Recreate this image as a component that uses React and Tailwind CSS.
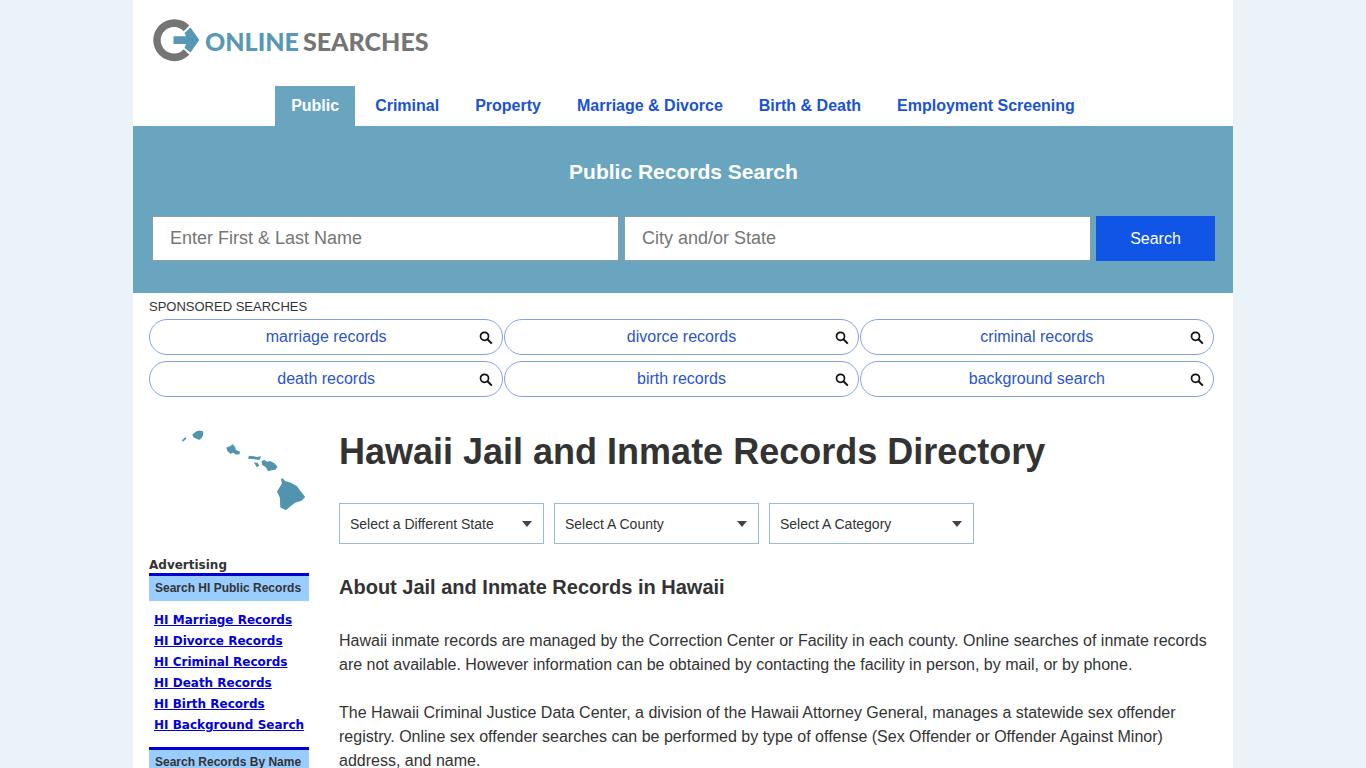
import React, { useState } from 'react';

const TABS = ['Public', 'Criminal', 'Property', 'Marriage & Divorce', 'Birth & Death', 'Employment Screening'];

const SPONSORED = [
  'marriage records',
  'divorce records',
  'criminal records',
  'death records',
  'birth records',
  'background search',
];

const AD_LINKS = [
  'HI Marriage Records',
  'HI Divorce Records',
  'HI Criminal Records',
  'HI Death Records',
  'HI Birth Records',
  'HI Background Search',
];

const Logo = () => (
  <a href="#" aria-label="Online Searches" className="inline-flex items-center">
    <svg viewBox="0 0 48 44" className="w-12 h-11" aria-hidden="true">
      <path
        d="M36.3 7.5A21 21 0 1 0 36.3 36.8L30.8 31.2A13.3 13.3 0 1 1 30.8 13.2Z"
        fill="#757575"
      />
      <path d="M20.5 18.2H33L31.5 15L37.5 9.5L46.3 22L37.5 34.5L31.5 30L33 26H20.5Z" fill="#5698b5" />
    </svg>
    <span className="ml-1 pt-0.5 font-['Lato',sans-serif] font-black text-[25px] leading-8 text-[#5698b5]">ONLINE</span>
    <span className="ml-1 pt-0.5 font-['Lato',sans-serif] font-black text-[25px] leading-8 text-[#757575]">SEARCHES</span>
  </a>
);

const SearchIcon = () => (
  <svg viewBox="0 0 14 14" className="w-3.5 h-3.5" aria-hidden="true">
    <circle cx="5.5" cy="5.3" r="4" fill="none" stroke="#111" strokeWidth="1.7" />
    <path d="M8.2 8L12.8 12.6" stroke="#111" strokeWidth="2" />
  </svg>
);

const HawaiiMap = () => (
  <svg viewBox="0 0 160 100" className="w-full" fill="#5294b0" aria-label="Hawaii" role="img">
    <path d="M32.8 20.5L36.5 17L37.3 18.8L34.2 21.5Z" />
    <path d="M43.3 14.5L47 11.4L50.5 10.6L53.9 11.3L54.4 13.8L52.9 17.7L50.2 20L47 18.6L44.5 17.2Z" />
    <path d="M77.3 27.5L81.5 26L83.5 24.1L86 27L87 30L91 31.5L90.3 34.6L86.5 34.4L84.5 32.8L81.5 33.8L78.3 31Z" />
    <path d="M100 35.8L104.5 36.2L108 37L112.2 36.3L110.5 40L107 39.5L103 39L99 38.7Z" />
    <path d="M104.8 42.6L108.5 42.8L110.3 45.8L108 47.2Z" />
    <path d="M112.3 41.5L115 39.8L118 41.8L121 41.1L125.5 43.3L128.5 46.8L126.5 49.7L122.5 50.2L119.1 51.2L116.8 47.2L113.3 45Z" />
    <path d="M131.8 58.8L134 58.4L136 61L142 62.8L148 66.3L151.5 71L156.2 77L152.5 80.7L146 82.7L141.5 86.2L137 90.2L131.3 87.5L130.8 77.5L128 71.5L133 63.5Z" />
  </svg>
);

const SelectBox = ({ label }) => (
  <div className="relative flex-1 max-w-[205px]">
    <select
      aria-label={label}
      className="appearance-none w-full h-[41px] pl-[10px] pr-8 text-sm text-[#333] bg-white border border-[#9bbccb]"
    >
      <option>{label}</option>
    </select>
    <svg viewBox="0 0 10 6" className="absolute right-3 top-[18px] w-2.5 h-1.5 pointer-events-none" aria-hidden="true">
      <path d="M0 0H10L5 6Z" fill="#444" />
    </svg>
  </div>
);

const AdHeading = ({ children }) => (
  <h3 className="border-t-3 border-[#0000d6] bg-[#99ccff] h-7 pl-1.5 text-xs leading-6 font-bold text-[#333] whitespace-nowrap">
    {children}
  </h3>
);

const App = () => {
  const [tab, setTab] = useState('Public');

  return (
    <div className="min-h-screen bg-[#eaf3f7] font-['Liberation_Sans',Arial,sans-serif] text-[#333]">
      <div className="max-w-[1100px] min-h-screen mx-auto bg-white">
        <header className="px-5 pt-[18px] h-[86px]">
          <Logo />
        </header>

        <nav className="flex justify-center gap-1">
          {TABS.map((name) => (
            <a
              key={name}
              href="#"
              onClick={() => setTab(name)}
              className={`h-10 px-4 leading-10 font-bold ${tab === name ? 'bg-[#69a5bf] text-white' : 'text-[#1a53d1]'}`}
            >
              {name}
            </a>
          ))}
        </nav>

        <section className="bg-[#69a5bf] h-[167px] pl-[19px] pr-[18px] pt-8">
          <h2 className="text-[21px] leading-7 font-bold text-white text-center">Public Records Search</h2>
          <form className="flex gap-[5px] mt-[30px]" onSubmit={(e) => e.preventDefault()}>
            <input
              type="text"
              aria-label="Enter First & Last Name"
              placeholder="Enter First & Last Name"
              className="flex-1 min-w-0 h-[45px] px-[17px] text-lg bg-white border border-[#8a9ea6] placeholder:text-[#757575]"
            />
            <input
              type="text"
              aria-label="City and/or State"
              placeholder="City and/or State"
              className="flex-1 min-w-0 h-[45px] px-[17px] text-lg bg-white border border-[#8a9ea6] placeholder:text-[#757575]"
            />
            <button type="submit" className="w-[119px] h-[45px] bg-[#1155e6] text-white text-base">
              Search
            </button>
          </form>
        </section>

        <section className="pl-4 pr-[19px] pt-1">
          <p className="text-[13px] leading-5">SPONSORED SEARCHES</p>
          <div className="grid grid-cols-3 gap-x-px gap-y-1.5 mt-0.5">
            {SPONSORED.map((name) => (
              <a
                key={name}
                href="#"
                className="relative flex items-center justify-center h-9 border border-[#84a2e2] rounded-full text-base text-[#2b55c9]"
              >
                {name}
                <span className="absolute right-[9px] top-[11px]">
                  <SearchIcon />
                </span>
              </a>
            ))}
          </div>
        </section>

        <div className="flex gap-[30px] px-4 pt-[23px]">
          <aside className="w-40 shrink-0">
            <HawaiiMap />
            <div className="mt-[37px] font-['DejaVu_Sans',Verdana,sans-serif] text-xs leading-4 font-bold">
              Advertising
            </div>
            <AdHeading>Search HI Public Records</AdHeading>
            <ul className="pl-[5px] pt-[9px] pb-[11px] font-['DejaVu_Sans',Verdana,sans-serif] text-xs leading-[21px] font-bold whitespace-nowrap">
              {AD_LINKS.map((name) => (
                <li key={name}>
                  <a href="#" className="text-[#0000dd] underline">{name}</a>
                </li>
              ))}
            </ul>
            <AdHeading>Search Records By Name</AdHeading>
          </aside>

          <main className="flex-1 min-w-0">
            <h1 className="pt-2 text-4xl leading-12 font-bold">Hawaii Jail and Inmate Records Directory</h1>
            <div className="flex gap-[10px] mt-[27px]">
              <SelectBox label="Select a Different State" />
              <SelectBox label="Select A County" />
              <SelectBox label="Select A Category" />
            </div>
            <h2 className="mt-[29px] text-xl leading-7 font-bold">About Jail and Inmate Records in Hawaii</h2>
            <p className="mt-7 leading-6">
              Hawaii inmate records are managed by the Correction Center or Facility in each county. Online searches of
              inmate records are not available. However information can be obtained by contacting the facility in person,
              by mail, or by phone.
            </p>
            <p className="mt-6 leading-6">
              The Hawaii Criminal Justice Data Center, a division of the Hawaii Attorney General, manages a statewide sex
              offender registry. Online sex offender searches can be performed by type of offense (Sex Offender or
              Offender Against Minor) address, and name.
            </p>
          </main>
        </div>
      </div>
    </div>
  );
};

export default App;
